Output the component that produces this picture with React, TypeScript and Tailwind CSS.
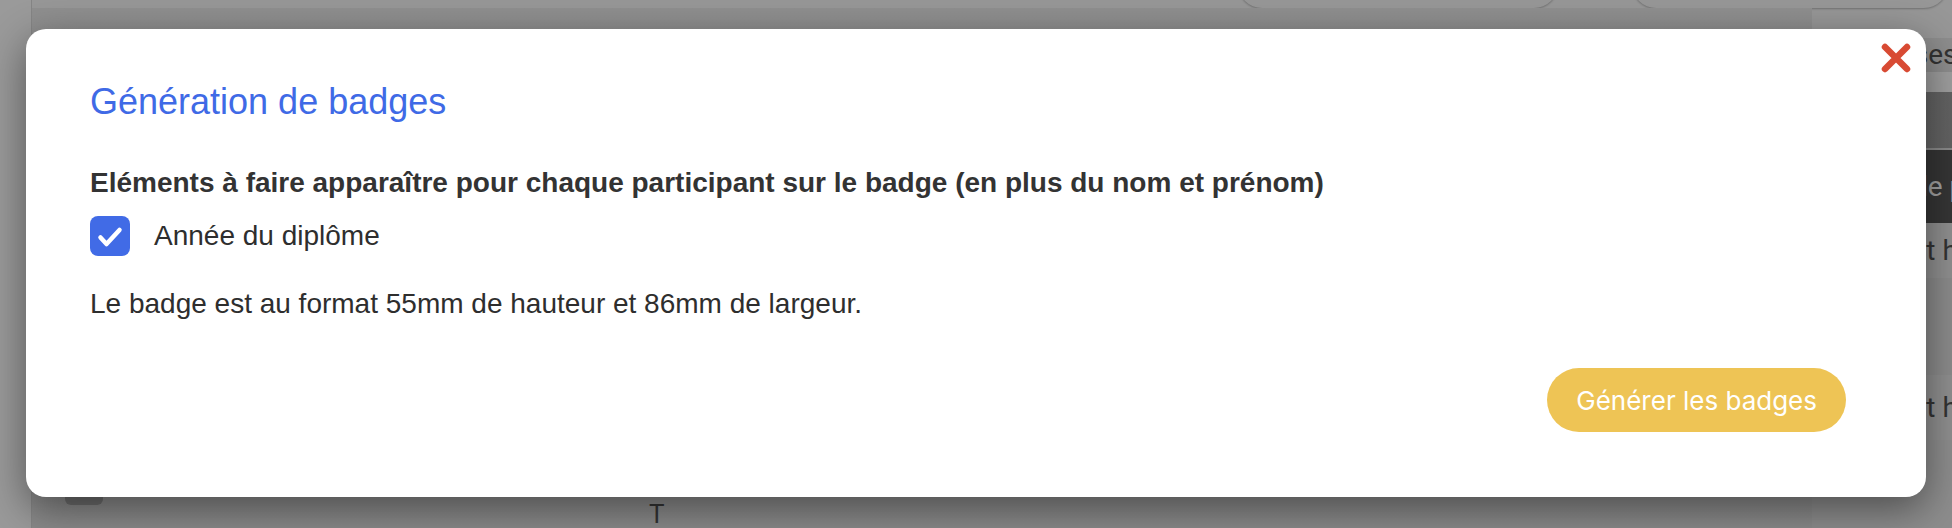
import { useState } from "react";

function CloseIcon() {
  return (
    <svg width="32" height="30" viewBox="0 0 32 30" fill="none">
      <path d="M5 4 L27 26 M27 4 L5 26" stroke="#d84a33" strokeWidth="6.5" strokeLinecap="round" />
    </svg>
  );
}

function Checkbox({ checked, onChange }: { checked: boolean; onChange: () => void }) {
  return (
    <button
      type="button"
      onClick={onChange}
      className={`w-[40px] h-[40px] rounded-[8px] flex items-center justify-center shrink-0 ${
        checked ? "bg-[#416be6]" : "bg-white border-2 border-[#999]"
      }`}
    >
      {checked && (
        <svg width="40" height="40" viewBox="0 0 40 40" fill="none">
          <path d="M10.5 21.5 L16.5 28 L29.5 14" stroke="white" strokeWidth="4.5" strokeLinecap="round" strokeLinejoin="round" />
        </svg>
      )}
    </button>
  );
}

export default function App() {
  const [year, setYear] = useState(true);

  return (
    <div className="relative w-[1952px] h-[528px] overflow-hidden bg-[#979797] font-['Liberation_Sans',Arial,sans-serif]">
      {/* page behind the overlay */}
      <div className="flex h-full">
        <div className="w-[32px] shrink-0 bg-[#9a9a9a] border-r border-[#858585]" />
        <div className="flex-1 flex flex-col">
          <div className="flex justify-end gap-[74px] pr-[4px] h-[8px] shrink-0">
            <div className="w-[320px] h-[48px] -mt-[40px] rounded-[24px] bg-[#979797] shadow-[0_1px_2px_rgba(0,0,0,0.25)]" />
            <div className="w-[316px] h-[48px] -mt-[40px] rounded-[24px] bg-[#979797] shadow-[0_1px_2px_rgba(0,0,0,0.25)]" />
          </div>
          <div className="flex flex-1">
            <div className="flex-1 flex flex-col justify-end bg-gradient-to-b from-[#8f8f8f] to-[#8a8a8a]">
              <div className="flex items-start h-[31px] pl-[33px]">
                <div className="w-[38px] h-[8px] rounded-b-[6px] bg-[#6d6d6d]" />
                <span className="ml-[546px] mt-[4px] text-[26px] leading-[26px] text-[#333] font-['Roboto',sans-serif]">T</span>
              </div>
            </div>
            <div className="w-[140px] shrink-0 flex flex-col pt-[30px] font-['Roboto',sans-serif] text-[28px] whitespace-nowrap overflow-hidden">
              <div className="h-[34px] bg-[#8d8d8d] text-[#333] leading-[34px] pl-[47px]">Classes</div>
              <div className="h-[20px] bg-[#9e9e9e]" />
              <div className="h-[58px] bg-gradient-to-r from-[#6e6e6e] to-[#626262] border-b-2 border-[#8a8a8a]" />
              <div className="h-[73px] bg-[#353535] text-[#a0a0a0] leading-[73px] pl-[100px]">de participant</div>
              <div className="h-[55px] bg-[#8f8f8f] text-[#333] leading-[55px] pl-[84px]">ent historique</div>
              <div className="h-[97px] bg-[#8b8b8b]" />
              <div className="h-[65px] bg-[#8f8f8f] text-[#333] leading-[65px] pl-[84px]">ent historique</div>
              <div className="flex-1 bg-[#8d8d8d]" />
            </div>
          </div>
        </div>
      </div>

      {/* modal overlay */}
      <div className="absolute inset-0 flex justify-center pt-[29px]">
        <div className="relative w-[1900px] h-[468px] bg-white rounded-[20px] shadow-[0_12px_40px_rgba(0,0,0,0.45)] pt-[55px] px-[64px] pb-[65px] flex flex-col text-[#2e2e2e]">
          <button type="button" className="absolute top-[14px] right-[14px]">
            <CloseIcon />
          </button>
          <h2 className="text-[36px] leading-[36px] text-[#3f6ae6]">Génération de badges</h2>
          <p className="mt-[47px] text-[28px] leading-[32px] font-bold text-[#333]">
            Eléments à faire apparaître pour chaque participant sur le badge (en plus du nom et prénom)
          </p>
          <label className="mt-[17px] flex items-center gap-[24px] h-[40px] text-[28px] leading-[32px]">
            <Checkbox checked={year} onChange={() => setYear(!year)} />
            <span>Année du diplôme</span>
          </label>
          <p className="mt-[32px] text-[28px] leading-[32px]">
            Le badge est au format 55mm de hauteur et 86mm de largeur.
          </p>
          <div className="mt-[48px] flex justify-end pr-[16px]">
            <button
              type="button"
              className="h-[64px] px-[29px] rounded-full bg-[#eec455] text-white text-[26px] font-['Inter',sans-serif]"
            >
              Générer les badges
            </button>
          </div>
        </div>
      </div>
    </div>
  );
}
